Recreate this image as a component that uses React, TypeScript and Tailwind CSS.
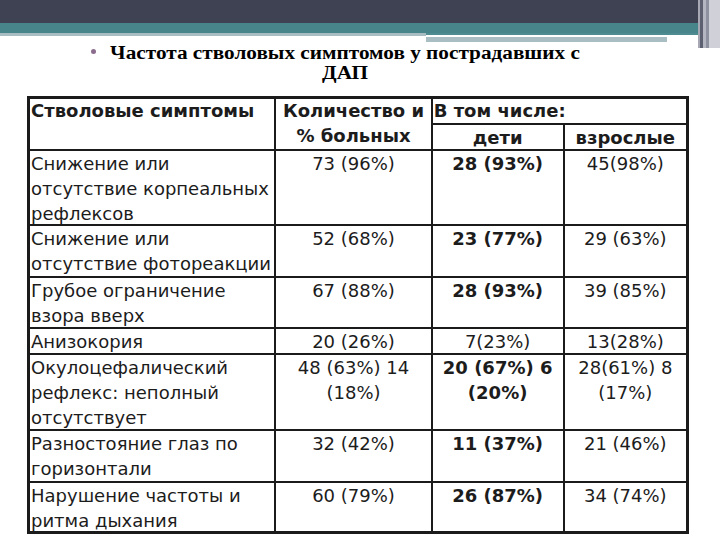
import React from "react";

const rows: { name: string[]; total: string[]; kids: string[]; kidsBold: boolean; adults: string[]; h: string }[] = [
  { name: ["Снижение или", "отсутствие корпеальных", "рефлексов"], total: ["73 (96%)"], kids: ["28 (93%)"], kidsBold: true, adults: ["45(98%)"], h: "h-[75px]" },
  { name: ["Снижение или", "отсутствие фотореакции"], total: ["52 (68%)"], kids: ["23 (77%)"], kidsBold: true, adults: ["29 (63%)"], h: "h-[52px]" },
  { name: ["Грубое ограничение", "взора вверх"], total: ["67 (88%)"], kids: ["28 (93%)"], kidsBold: true, adults: ["39 (85%)"], h: "h-[51px]" },
  { name: ["Анизокория"], total: ["20 (26%)"], kids: ["7(23%)"], kidsBold: false, adults: ["13(28%)"], h: "h-[26px]" },
  { name: ["Окулоцефалический", "рефлекс: неполный", "отсутствует"], total: ["48 (63%) 14", "(18%)"], kids: ["20 (67%) 6", "(20%)"], kidsBold: true, adults: ["28(61%) 8", "(17%)"], h: "h-[76px]" },
  { name: ["Разностояние глаз по", "горизонтали"], total: ["32 (42%)"], kids: ["11 (37%)"], kidsBold: true, adults: ["21 (46%)"], h: "h-[52px]" },
  { name: ["Нарушение частоты и", "ритма дыхания"], total: ["60 (79%)"], kids: ["26 (87%)"], kidsBold: true, adults: ["34 (74%)"], h: "h-[51px]" },
];

function Lines({ lines }: { lines: string[] }) {
  return (
    <div className="-mb-[6px]">
      {lines.map((l, i) => (
        <div key={i} className="whitespace-nowrap">{l}</div>
      ))}
    </div>
  );
}

export default function App() {
  return (
    <div className="w-[720px] h-[540px] bg-white overflow-hidden relative">
      {/* header decoration */}
      <div className="flex h-[48px]">
        <div className="flex-1 flex flex-col">
          <div className="h-[23px] bg-[#3f4253]" />
          <div className="h-[10px] bg-[#47858b]" />
          <div className="flex">
            <div className="w-[426px] flex flex-col">
              <div className="h-[3px] bg-[#a7bdc1]" />
            </div>
            <div className="flex-1 flex flex-col">
              <div className="h-[2px] bg-[#4f8c91]" />
              <div className="h-[2px] bg-white" />
              <div className="flex">
                <div className="w-[241px] h-[5px] bg-[#a9bec2]" />
              </div>
            </div>
          </div>
        </div>
        <div className="w-[22px] flex">
          <div className="w-[2px] bg-[#a8a8b4]" />
          <div className="w-[3px] bg-[#5c6070]" />
          <div className="w-[3px] bg-[#b4b6c2]" />
          <div className="w-[3px] bg-[#8e919f]" />
          <div className="flex-1 bg-[#cfd0d8]" />
        </div>
      </div>

      {/* title */}
      <div className="flex items-start mt-[-5px]" style={{ fontFamily: "'Liberation Serif', 'Times New Roman', serif" }}>
        <div className="w-[96px] flex justify-end pt-[6px]">
          <div className="w-[5px] h-[5px] rounded-full bg-[#8b6c8e]" />
        </div>
        <div className="w-[498px] text-center font-bold text-[18px] leading-[20px] text-black scale-x-[1.18]">
          <div className="whitespace-nowrap">Частота стволовых симптомов у пострадавших с</div>
          <div>ДАП</div>
        </div>
      </div>

      {/* table */}
      <div className="ml-[27px] mt-[13px] w-[662px]" style={{ fontFamily: "'DejaVu Sans', Verdana, sans-serif" }}>
        <table className="table-fixed border-collapse border-[3px] border-[#1b1b1b] text-[18px] leading-[25px] text-[#1c1c1c]">
          <colgroup>
            <col className="w-[247px]" />
            <col className="w-[157px]" />
            <col className="w-[133px]" />
            <col className="w-[125px]" />
          </colgroup>
          <tbody>
            <tr className="h-[26px]">
              <td rowSpan={2} className="border-2 border-[#1b1b1b] align-top px-[1px] p-0 font-bold">
                <div className="whitespace-nowrap -mt-[1px]">Стволовые симптомы</div>
              </td>
              <td rowSpan={2} className="border-2 border-[#1b1b1b] align-top p-0 text-center font-bold">
                <div className="-mt-[1px]">
                  <Lines lines={["Количество и", "% больных"]} />
                </div>
              </td>
              <td colSpan={2} className="border-2 border-[#1b1b1b] align-top px-[1px] p-0 font-bold">
                <div className="whitespace-nowrap -mt-[1px] -mb-[6px]">В том числе:</div>
              </td>
            </tr>
            <tr className="h-[26px]">
              <td className="border-2 border-[#1b1b1b] align-top p-0 text-center font-bold">
                <div className="-mb-[6px]">дети</div>
              </td>
              <td className="border-2 border-[#1b1b1b] align-top p-0 text-center font-bold">
                <div className="-mb-[6px]">взрослые</div>
              </td>
            </tr>
            {rows.map((r, i) => (
              <tr key={i} className={r.h}>
                <td className="border-2 border-[#1b1b1b] align-top px-[1px] p-0">
                  <Lines lines={r.name} />
                </td>
                <td className="border-2 border-[#1b1b1b] align-top p-0 text-center">
                  <Lines lines={r.total} />
                </td>
                <td className={`border-2 border-[#1b1b1b] align-top p-0 text-center ${r.kidsBold ? "font-bold" : ""}`}>
                  <Lines lines={r.kids} />
                </td>
                <td className="border-2 border-[#1b1b1b] align-top p-0 text-center">
                  <Lines lines={r.adults} />
                </td>
              </tr>
            ))}
          </tbody>
        </table>
      </div>
    </div>
  );
}
